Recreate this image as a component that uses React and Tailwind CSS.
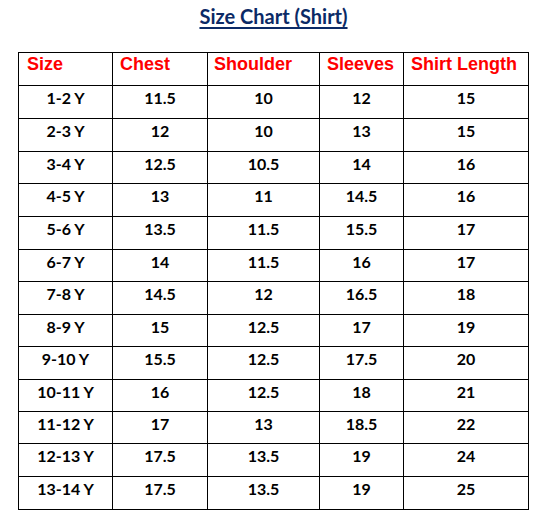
import React from "react";

const rows = [
  ["1-2 Y", "11.5", "10", "12", "15", "h-[33px]"],
  ["2-3 Y", "12", "10", "13", "15", "h-[33px]"],
  ["3-4 Y", "12.5", "10.5", "14", "16", "h-[32px]"],
  ["4-5 Y", "13", "11", "14.5", "16", "h-[33px]"],
  ["5-6 Y", "13.5", "11.5", "15.5", "17", "h-[33px]"],
  ["6-7 Y", "14", "11.5", "16", "17", "h-[32px]"],
  ["7-8 Y", "14.5", "12", "16.5", "18", "h-[33px]"],
  ["8-9 Y", "15", "12.5", "17", "19", "h-[32px]"],
  ["9-10 Y", "15.5", "12.5", "17.5", "20", "h-[33px]"],
  ["10-11 Y", "16", "12.5", "18", "21", "h-[32px]"],
  ["11-12 Y", "17", "13", "18.5", "22", "h-[32px]"],
  ["12-13 Y", "17.5", "13.5", "19", "24", "h-[33px]"],
  ["13-14 Y", "17.5", "13.5", "19", "25", "h-[33px]"],
];

const headers = [
  ["Size", "pl-[8px]"],
  ["Chest", "pl-[7px]"],
  ["Shoulder", "pl-[6px]"],
  ["Sleeves", "pl-[7px]"],
  ["Shirt Length", "pl-[7px]"],
];

export default function App() {
  return (
    <div className="w-[547px] h-[519px] bg-white overflow-hidden">
      <div className="pl-[18px] pt-[6px]">
        <div className="w-[511px] flex justify-center">
          <h1 className="font-['Lato',sans-serif] font-bold text-[20px] leading-[20px] text-[#0b2a66] underline underline-offset-[3px] decoration-[1.5px]">
            Size Chart (Shirt)
          </h1>
        </div>
        <div className="mt-[26px] w-[511px] border-l border-t border-black grid grid-cols-[94px_95px_112px_84px_125px]">
          {headers.map(([h, pl]) => (
            <div
              key={h}
              className={`${pl} h-[33px] border-r border-b border-black pt-[1px] font-['Liberation_Sans',Arial,sans-serif] font-bold text-[18px] leading-[20px] text-[#ff0000] whitespace-nowrap`}
            >
              {h}
            </div>
          ))}
          {rows.map((r) =>
            r.slice(0, 5).map((c, j) => (
              <div
                key={r[0] + j}
                className={`${r[5]} border-r border-b border-black text-center pt-[2px] font-['Lato',sans-serif] font-bold text-[16px] leading-[20px] text-black`}
              >
                {c}
              </div>
            ))
          )}
        </div>
      </div>
    </div>
  );
}
